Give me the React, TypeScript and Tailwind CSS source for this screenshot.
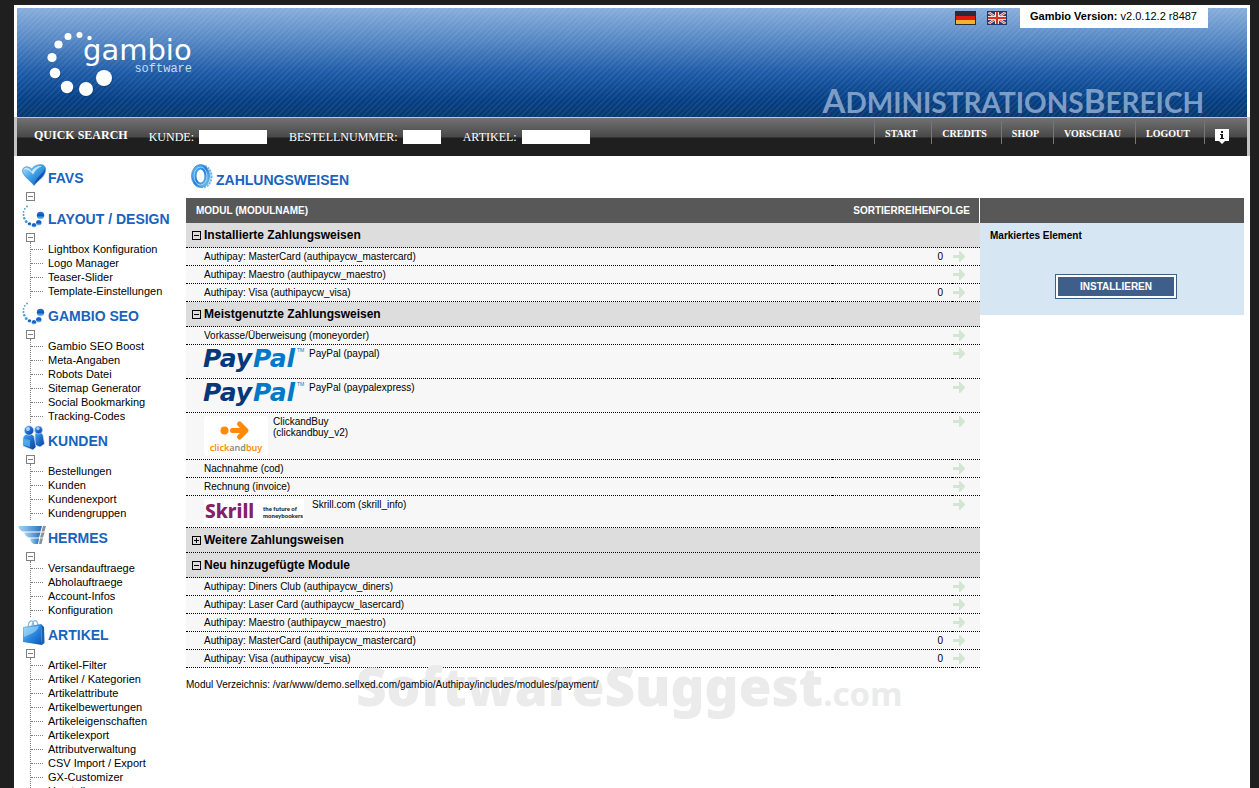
import type { ReactNode } from "react";

type Section = { title: string; icon: ReactNode; items: string[] };
type Module = {
  label: string;
  order?: number;
  logo?: "paypal" | "clickandbuy" | "skrill";
};
type Group = { title: string; open: boolean; modules: Module[] };

function HeartIcon() {
  return (
    <svg width="24" height="24" viewBox="0 0 24 24">
      <defs>
        <linearGradient id="heart" x1="0" y1="0" x2="1" y2="1">
          <stop offset="0" stopColor="#bfe6fa" />
          <stop offset="0.45" stopColor="#3fa3e8" />
          <stop offset="1" stopColor="#0d4fb5" />
        </linearGradient>
      </defs>
      <path d="M12 22.500C9 18 1.500 14 .5 8C0 4 6 2 9.500 6C12 2.500 17 1 21 2C25 4 24 10 20.500 14C17 17.500 14 19.500 12 22.500Z" fill="url(#heart)" stroke="#3a86cf" strokeWidth=".7" />
      <path d="M2 6.500C3 4 7 4.500 9.500 8.500C12 4.500 16 2.500 20 3C16 4.500 13 7.500 11 11.500C9 8.500 5 5.500 2 6.500Z" fill="#d9f1fc" opacity=".85" />
      <path d="M12 22C16 17 23 13 23 6C20 12 14 14 12 22Z" fill="#0b46a8" opacity=".8" />
    </svg>
  );
}

function DotsIcon() {
  return (
    <svg width="24" height="24" viewBox="0 0 24 24">
      <defs>
        <linearGradient id="dot" x1="0" y1="0" x2="0" y2="1">
          <stop offset="0" stopColor="#2a6fd0" />
          <stop offset="0.5" stopColor="#1257bd" />
          <stop offset="1" stopColor="#7fd4f7" />
        </linearGradient>
      </defs>
      <g fill="#4a9ad6">
        <circle cx="5" cy="2.500" r=".9" />
        <circle cx="2.800" cy="4.800" r=".9" />
        <circle cx="1.600" cy="7.800" r=".9" />
        <circle cx="1.500" cy="11" r="1" />
        <circle cx="2.300" cy="14.300" r="1.200" />
        <circle cx="4.200" cy="17.500" r="1.500" />
      </g>
      <circle cx="7.500" cy="20" r="1.800" fill="url(#dot)" />
      <circle cx="12" cy="21.300" r="2.200" fill="url(#dot)" />
      <circle cx="16.800" cy="18.800" r="2.700" fill="url(#dot)" />
      <circle cx="18.500" cy="11.500" r="3.700" fill="url(#dot)" />
    </svg>
  );
}

function PeopleIcon() {
  return (
    <svg width="24" height="26" viewBox="0 0 24 26">
      <defs>
        <linearGradient id="people" x1="0" y1="0" x2="1" y2="1">
          <stop offset="0" stopColor="#48a7ea" />
          <stop offset="0.6" stopColor="#1c62c4" />
          <stop offset="1" stopColor="#0c3f9f" />
        </linearGradient>
      </defs>
      <g fill="url(#people)" stroke="#d5eaf8" strokeWidth=".6">
        <path d="M13 9C15 6 20 7 21 10L22.500 19L18 22L13 20Z" />
        <circle cx="16.500" cy="5" r="4" />
        <path d="M1 13C2 8 9 8 12 11L14 22L11 25L1 21Z" />
        <circle cx="7" cy="5.500" r="4.700" />
      </g>
      <path d="M2 14L8 15L8 22L2 20Z" fill="#58bdf2" opacity=".7" />
      <circle cx="6" cy="4" r="2" fill="#c5e8fa" opacity=".8" />
      <circle cx="16" cy="3.500" r="1.600" fill="#c5e8fa" opacity=".8" />
    </svg>
  );
}

function HermesIcon() {
  return (
    <svg width="28" height="20" viewBox="0 0 28 20">
      <defs>
        <linearGradient id="hermes" x1="0" y1="0" x2="1" y2="0">
          <stop offset="0" stopColor="#a8d6f2" />
          <stop offset="1" stopColor="#2a72bd" />
        </linearGradient>
      </defs>
      <path d="M0 1H24L22.500 6.500H5Q2 6 0 1Z" fill="url(#hermes)" />
      <path d="M6 7.500H22.500L21 12.500H11Q8 12 6 7.500Z" fill="url(#hermes)" />
      <path d="M12 13.500H21L20 19H16Q13 18 12 13.500Z" fill="url(#hermes)" />
      <path d="M25 1H28L26.500 6.500H23.500ZM23.500 7.500H26.500L25 12.500H22ZM22 13.500H25L23.500 19H21Z" fill="#8b9299" />
    </svg>
  );
}

function BagIcon() {
  return (
    <svg width="24" height="27" viewBox="0 0 24 27">
      <defs>
        <linearGradient id="bag" x1="0" y1="0" x2="1" y2="1">
          <stop offset="0" stopColor="#8ed1f5" />
          <stop offset="0.5" stopColor="#2b8be0" />
          <stop offset="1" stopColor="#0d52b8" />
        </linearGradient>
      </defs>
      <path d="M6 8C7 0 11 0 12 7M10 7C11 0 15 0 16 6" fill="none" stroke="#8ab6d6" strokeWidth="1.200" />
      <path d="M1 8L19 5L20 26L1 23Z" fill="url(#bag)" />
      <path d="M19 5L22 8L22.500 24L20 26Z" fill="#1d5fb0" />
      <path d="M2 9L17 7C15 14 8 15 2 18Z" fill="#b9e4fa" opacity=".55" />
    </svg>
  );
}

function RingIcon() {
  return (
    <svg width="22" height="26" viewBox="0 0 22 26">
      <defs>
        <linearGradient id="ring" x1="0" y1="0" x2="1" y2="1">
          <stop offset="0" stopColor="#63b8f0" />
          <stop offset="0.5" stopColor="#1f7ad8" />
          <stop offset="1" stopColor="#7cc6f2" />
        </linearGradient>
      </defs>
      <ellipse cx="12.500" cy="12.500" rx="8" ry="10.500" fill="#cde8f8" stroke="#6fb4e4" strokeWidth="2" strokeDasharray="2 1" />
      <ellipse cx="9.500" cy="12" rx="6.500" ry="9" fill="#fff" stroke="url(#ring)" strokeWidth="5" />
      <ellipse cx="9.500" cy="12" rx="6.500" ry="9" fill="none" stroke="#9ad6f8" strokeWidth="1" />
      <ellipse cx="9.500" cy="12" rx="9" ry="11.500" fill="none" stroke="#3d8fd4" strokeWidth=".8" />
    </svg>
  );
}

function GambioLogo() {
  return (
    <svg width="160" height="76" viewBox="0 0 160 76" role="img" aria-label="gambio software">
      <g fill="#06306b" opacity=".35" transform="translate(1 1)">
        <circle cx="61" cy="50" r="8" />
        <circle cx="43" cy="61" r="7" />
        <circle cx="24" cy="59" r="6" />
        <circle cx="12" cy="45" r="5" />
      </g>
      <g fill="#fff">
        <circle cx="46.500" cy="10" r="2.200" />
        <circle cx="36.500" cy="7" r="3" />
        <circle cx="25" cy="8.500" r="3.500" />
        <circle cx="15.500" cy="16.500" r="4.100" />
        <circle cx="9" cy="29.500" r="4.600" />
        <circle cx="12" cy="45" r="5.300" />
        <circle cx="24" cy="59" r="6.200" />
        <circle cx="43" cy="61" r="7" />
        <circle cx="61" cy="50" r="8" />
      </g>
      <text x="40" y="32" fill="#fff" fontFamily="DejaVu Sans, sans-serif" fontSize="29">gambio</text>
      <text x="149" y="44" textAnchor="end" fill="#c9dcf2" fontFamily="Liberation Mono, monospace" fontSize="12">software</text>
    </svg>
  );
}

function GermanFlag() {
  return (
    <svg width="21" height="14" viewBox="0 0 21 14">
      <rect width="21" height="14" fill="#2b2b33" />
      <rect x="1" y="5" width="19" height="4" fill="#dc1a12" />
      <rect x="1" y="9" width="19" height="4" fill="#f3b12f" />
    </svg>
  );
}

function BritishFlag() {
  return (
    <svg width="20" height="14" viewBox="0 0 20 14">
      <rect width="20" height="14" fill="#2a3d78" />
      <path d="M1 1L19 13M19 1L1 13" stroke="#f3e3dc" strokeWidth="2.500" />
      <path d="M1 1L19 13M19 1L1 13" stroke="#d8512c" strokeWidth="1" />
      <path d="M10 0V14M0 7H20" stroke="#f3e3dc" strokeWidth="4" />
      <path d="M10 0V14M0 7H20" stroke="#d8312c" strokeWidth="2" />
      <rect x=".5" y=".5" width="19" height="13" fill="none" stroke="#24356b" />
    </svg>
  );
}

function InfoIcon() {
  return (
    <svg width="14" height="15" viewBox="0 0 14 15">
      <path d="M0 0H14V12H10L7 15L4 12H0Z" fill="#fff" />
      <path d="M6 2H8V4H6ZM5 5H8V9H9V10H5V9H6V6H5Z" fill="#1f1f1f" />
    </svg>
  );
}

function Arrow() {
  return (
    <svg width="12" height="12" viewBox="0 0 12 12" className="block">
      <path d="M0 4H6V0H7L12 5V6L7 11H6V7H0Z" fill="#d3e5d3" />
    </svg>
  );
}

function PayPalLogo() {
  return (
    <svg width="100" height="27" viewBox="0 0 100 27" className="overflow-visible" role="img" aria-label="PayPal">
      <g fontFamily="DejaVu Sans, sans-serif" fontWeight="700" fontStyle="italic" fontSize="25">
        <text x="-1" y="19" fill="#05387a">Pay</text>
        <text x="49" y="19" fill="#0079c8">Pal</text>
      </g>
      <text x="93" y="4" fill="#0079c8" fontFamily="Liberation Sans, sans-serif" fontSize="5">TM</text>
    </svg>
  );
}

function ClickAndBuyLogo() {
  return (
    <svg width="64" height="40" viewBox="0 0 64 40" role="img" aria-label="clickandbuy">
      <rect width="64" height="40" rx="3" fill="#fff" />
      <circle cx="20.500" cy="14.500" r="4" fill="#ff8a0a" />
      <path d="M28.500 14.500H40M35.500 8L42 14.500L35.500 21" fill="none" stroke="#ff8a0a" strokeWidth="5" strokeLinecap="round" strokeLinejoin="round" />
      <text x="32" y="35" textAnchor="middle" fontFamily="Noto Sans, sans-serif" fontWeight="600" fontSize="9">
        <tspan fill="#ff8a0a">click</tspan>
        <tspan fill="#8a8a8a">and</tspan>
        <tspan fill="#ff8a0a">buy</tspan>
      </text>
    </svg>
  );
}

function SkrillLogo() {
  return (
    <svg width="103" height="25" viewBox="0 0 103 25" role="img" aria-label="Skrill, the future of moneybookers">
      <rect width="100" height="25" fill="#fff" />
      <text x="1" y="19" fill="#862165" fontFamily="Noto Sans, sans-serif" fontWeight="800" fontSize="19">Skrill</text>
      <g fill="#222" fontFamily="Lato, sans-serif" fontWeight="900" fontSize="6">
        <text x="59" y="12">the future of</text>
        <text x="59" y="19">moneybookers</text>
      </g>
    </svg>
  );
}

const logos = {
  paypal: <PayPalLogo />,
  clickandbuy: <ClickAndBuyLogo />,
  skrill: <SkrillLogo />,
};

const sections: Section[] = [
  { title: "FAVS", icon: <HeartIcon />, items: [] },
  {
    title: "LAYOUT / DESIGN",
    icon: <DotsIcon />,
    items: ["Lightbox Konfiguration", "Logo Manager", "Teaser-Slider", "Template-Einstellungen"],
  },
  {
    title: "GAMBIO SEO",
    icon: <DotsIcon />,
    items: ["Gambio SEO Boost", "Meta-Angaben", "Robots Datei", "Sitemap Generator", "Social Bookmarking", "Tracking-Codes"],
  },
  {
    title: "KUNDEN",
    icon: <PeopleIcon />,
    items: ["Bestellungen", "Kunden", "Kundenexport", "Kundengruppen"],
  },
  {
    title: "HERMES",
    icon: <HermesIcon />,
    items: ["Versandauftraege", "Abholauftraege", "Account-Infos", "Konfiguration"],
  },
  {
    title: "ARTIKEL",
    icon: <BagIcon />,
    items: [
      "Artikel-Filter",
      "Artikel / Kategorien",
      "Artikelattribute",
      "Artikelbewertungen",
      "Artikeleigenschaften",
      "Artikelexport",
      "Attributverwaltung",
      "CSV Import / Export",
      "GX-Customizer",
      "Hersteller",
    ],
  },
];

const groups: Group[] = [
  {
    title: "Installierte Zahlungsweisen",
    open: true,
    modules: [
      { label: "Authipay: MasterCard (authipaycw_mastercard)", order: 0 },
      { label: "Authipay: Maestro (authipaycw_maestro)" },
      { label: "Authipay: Visa (authipaycw_visa)", order: 0 },
    ],
  },
  {
    title: "Meistgenutzte Zahlungsweisen",
    open: true,
    modules: [
      { label: "Vorkasse/Überweisung (moneyorder)" },
      { label: "PayPal (paypal)", logo: "paypal" },
      { label: "PayPal (paypalexpress)", logo: "paypal" },
      { label: "ClickandBuy\n(clickandbuy_v2)", logo: "clickandbuy" },
      { label: "Nachnahme (cod)" },
      { label: "Rechnung (invoice)" },
      { label: "Skrill.com (skrill_info)", logo: "skrill" },
    ],
  },
  { title: "Weitere Zahlungsweisen", open: false, modules: [] },
  {
    title: "Neu hinzugefügte Module",
    open: true,
    modules: [
      { label: "Authipay: Diners Club (authipaycw_diners)" },
      { label: "Authipay: Laser Card (authipaycw_lasercard)" },
      { label: "Authipay: Maestro (authipaycw_maestro)" },
      { label: "Authipay: MasterCard (authipaycw_mastercard)", order: 0 },
      { label: "Authipay: Visa (authipaycw_visa)", order: 0 },
    ],
  },
];

const navLinks = ["START", "CREDITS", "SHOP", "VORSCHAU", "LOGOUT"];

function Toggle({ open, color }: { open: boolean; color: string }) {
  return (
    <svg width="9" height="9" viewBox="0 0 9 9" className="block">
      <rect x=".5" y=".5" width="8" height="8" fill="none" stroke={color} />
      <path d={open ? "M2 4.500H7" : "M2 4.500H7M4.500 2V7"} stroke={color} />
    </svg>
  );
}

function Header() {
  return (
    <header className="mx-[3px] flex h-[109px] justify-between bg-[repeating-linear-gradient(135deg,rgba(255,255,255,0.07)_0px,rgba(255,255,255,0.07)_1px,transparent_2px,transparent_4px),linear-gradient(#88aedb,#5587c4_30%,#1c5aa6_60%,#053f83_85%,#0a376e)]">
      <div className="pt-[20px] pl-[26px]">
        <GambioLogo />
      </div>
      <div className="flex flex-col items-end justify-between pr-[39px]">
        <div className="flex items-start">
          <button aria-label="Deutsch" className="mt-[3px] mr-[11px]">
            <GermanFlag />
          </button>
          <button aria-label="English" className="mt-[3px] mr-[13px]">
            <BritishFlag />
          </button>
          <p className="h-5 bg-white pr-[11px] pl-[10px] text-[11px] leading-4 text-black">
            <b>Gambio Version:</b> v2.0.12.2 r8487
          </p>
        </div>
        <div className="mr-1 font-[Lato,sans-serif] text-[28px] leading-[30px] font-bold text-[#7c9dc5]">
          <span className="text-[33px]">A</span>DMINISTRATIONS<span className="text-[33px]">B</span>EREICH
        </div>
      </div>
    </header>
  );
}

function SearchField({ id, label, size }: { id: string; label: string; size: string }) {
  return (
    <div className="flex items-center gap-[5px]">
      <label htmlFor={id}>{label}</label>
      <input id={id} type="text" className={`h-[14px] bg-white px-1 text-[11px] text-black ${size}`} />
    </div>
  );
}

function NavBar() {
  return (
    <nav className="flex h-[39px] justify-between border-x-[3px] border-t border-[#c4c4c4] bg-[linear-gradient(#727272,#484848_19px,#1f1f1f_20px)] font-['Liberation_Serif',serif] text-white">
      <form className="flex gap-[22px] pl-[17px] text-[12px]">
        <div className="flex items-center gap-[21px]">
          <b className="pb-1">QUICK SEARCH</b>
          <SearchField id="kunde" label="KUNDE:" size="w-[68px]" />
        </div>
        <SearchField id="bestellnummer" label="BESTELLNUMMER:" size="w-[38px]" />
        <SearchField id="artikel" label="ARTIKEL:" size="w-[68px]" />
      </form>
      <div className="flex items-start pt-[3px] pr-[18px]">
        {navLinks.map((name) => (
          <a
            key={name}
            href={`#${name.toLowerCase()}`}
            className="h-[23px] border-l border-[#777] pr-[14px] pl-[10px] text-[10px] leading-[26px] font-bold"
          >
            {name}
          </a>
        ))}
        <button aria-label="Info" className="flex h-[23px] items-end border-l border-[#777] pl-[10px]">
          <InfoIcon />
        </button>
      </div>
    </nav>
  );
}

function Sidebar() {
  return (
    <aside className="w-[172px] shrink-0 pt-[6px]">
      {sections.map((section) => (
        <section key={section.title} className="pb-[2px]">
          <h2 className="flex h-[30px] items-center text-[14px] font-bold text-[#1764be]">
            <span className="flex w-[34px] shrink-0 justify-end pr-[2px] pb-1">{section.icon}</span>
            <span className="pt-[2px] whitespace-nowrap">{section.title}</span>
          </h2>
          <button aria-label={section.title} className="ml-3 block">
            <Toggle open color="#808080" />
          </button>
          <ul className="ml-4 border-l border-dotted border-[#808080]">
            {section.items.map((item) => (
              <li key={item} className="flex h-[14px] items-center text-[11px] leading-[14px]">
                <span className="mr-[5px] w-3 border-t border-dotted border-[#808080]" />
                <a href="#modul" className="whitespace-nowrap">
                  {item}
                </a>
              </li>
            ))}
          </ul>
        </section>
      ))}
    </aside>
  );
}

function ModuleRow({ module }: { module: Module }) {
  return (
    <tr className="bg-[#f7f7f7] align-top">
      <td className="border-b border-dotted border-black pl-[18px]">
        <div className="flex">
          {module.logo && <span className="py-[3px] pr-[5px] [&>svg]:block">{logos[module.logo]}</span>}
          <a href="#modul" className="py-[3px] leading-[11px] whitespace-pre">
            {module.label}
          </a>
        </div>
      </td>
      <td className="border-b border-dotted border-black pr-[9px] text-right leading-[17px]">{module.order}</td>
      <td className="border-b border-dotted border-black pt-[3px] pl-px">
        <a href="#modul" aria-label={module.label} className="block w-3">
          <Arrow />
        </a>
      </td>
    </tr>
  );
}

function ModuleTable() {
  return (
    <table className="w-full table-fixed border-separate border-spacing-0 text-[10px]">
      <colgroup>
        <col />
        <col className="w-[120px]" />
        <col className="w-[28px]" />
      </colgroup>
      <thead>
        <tr className="h-[25px] bg-[#585858] text-white">
          <th className="pl-[10px] text-left">MODUL (MODULNAME)</th>
          <th colSpan={2} className="border-r border-white pr-[9px] text-right">
            SORTIERREIHENFOLGE
          </th>
        </tr>
      </thead>
      {groups.map((group) => (
        <tbody key={group.title}>
          <tr className="h-[25px] bg-[#ddd]">
            <th colSpan={3} className="border-b border-dotted border-black pl-[6px] text-left text-[12px] leading-4">
              <button className="flex items-center gap-[3px]">
                <Toggle open={group.open} color="#000" />
                {group.title}
              </button>
            </th>
          </tr>
          {group.modules.map((module) => (
            <ModuleRow key={module.label} module={module} />
          ))}
        </tbody>
      ))}
    </table>
  );
}

export default function App() {
  return (
    <div className="h-screen overflow-hidden bg-[#1f1f1f] pt-[5px] pr-[9px] pl-[14px] font-['Liberation_Sans',Arial,sans-serif] text-black">
      <div className="min-h-full bg-white pt-[3px]">
        <Header />
        <NavBar />
        <div className="flex">
          <Sidebar />
          <main className="min-w-0 flex-1 pt-2 pr-[6px]">
            <h1 className="flex h-[34px] items-start pl-[5px] text-[14px] leading-8 font-bold text-[#1764be]">
              <RingIcon />
              <span className="pl-[3px]">ZAHLUNGSWEISEN</span>
            </h1>
            <div className="flex items-start">
              <div className="min-w-0 flex-1">
                <ModuleTable />
                <div className="relative">
                  <div className="absolute -top-1.5 left-[170px] font-['Noto_Sans',sans-serif] text-[53px] leading-[48px] font-black whitespace-nowrap text-[#ebebeb]">
                    SoftwareSuggest<span className="text-[33px] font-bold">.com</span>
                  </div>
                  <p className="relative pt-[10px] text-[10px] leading-[14px]">
                    Modul Verzeichnis: /var/www/demo.sellxed.com/gambio/Authipay/includes/modules/payment/
                  </p>
                </div>
              </div>
              <div className="w-[264px] shrink-0">
                <div className="h-[25px] bg-[#585858]" />
                <div className="bg-[#d6e6f3] px-[10px] pt-[6px] pb-4 text-[10px] font-bold">
                  <p className="leading-[14px]">Markiertes Element</p>
                  <div className="mt-[31px] flex justify-center pl-2">
                    <button className="h-[25px] w-[122px] border border-[#3e5f8a] bg-white p-[2px] text-white">
                      <span className="block bg-[#3e5f8a] leading-[19px]">INSTALLIEREN</span>
                    </button>
                  </div>
                </div>
              </div>
            </div>
          </main>
        </div>
      </div>
    </div>
  );
}
